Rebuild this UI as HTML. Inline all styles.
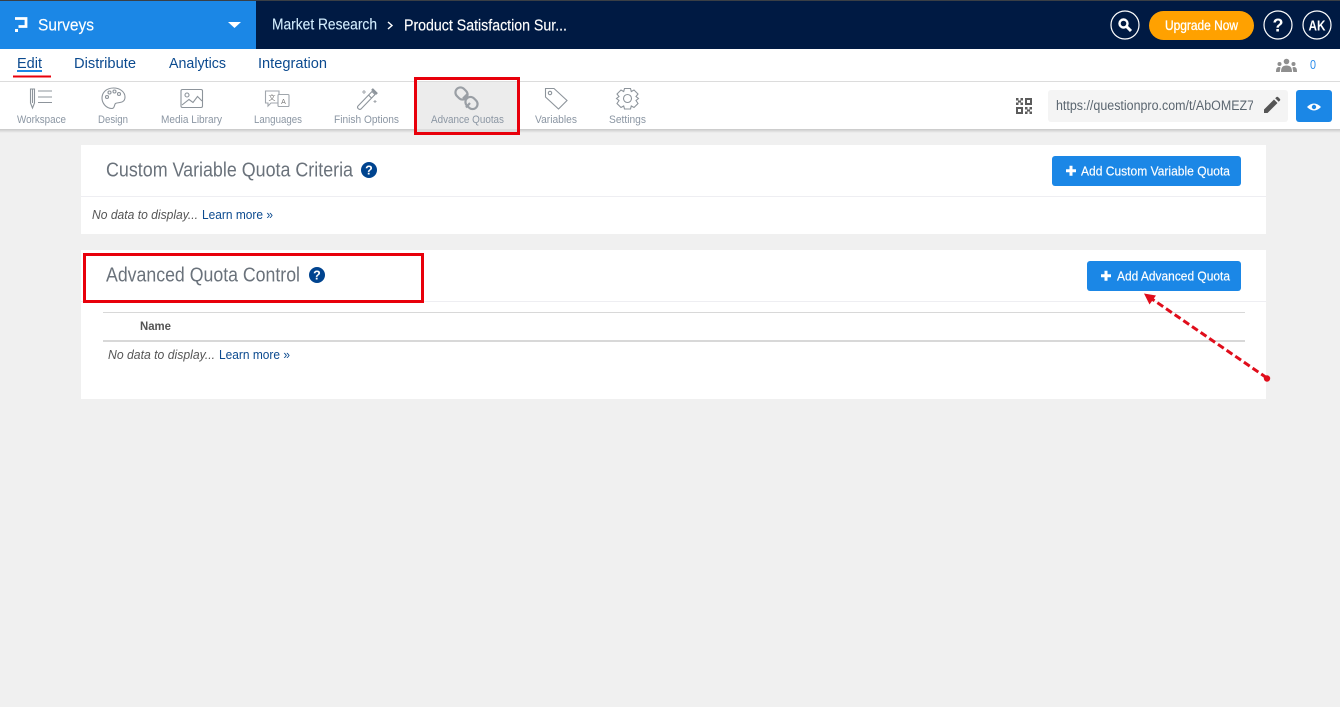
<!DOCTYPE html>
<html lang="en"><head><meta charset="utf-8"><title>Advance Quotas</title>
<style>
html,body{margin:0;padding:0;width:1340px;height:707px;overflow:hidden;background:#f0f0f0}
svg{display:block;font-family:"Liberation Sans",sans-serif}
.ic{fill:none;stroke:#8d949b;stroke-width:1.1}
.t{font-size:11px;fill:#8b96a3}
.n{font-size:15px;fill:#0b4a8f}
.b{font-size:13px;fill:#fff;stroke:#fff;stroke-width:.15}
.h{font-size:20px;fill:#6a727b}
.nd{font-size:13px;font-style:italic;fill:#555}
.lm{font-size:13px;fill:#0b4a8f}
</style></head><body>
<svg width="1340" height="707" viewBox="0 0 1340 707" xmlns="http://www.w3.org/2000/svg">
<defs>
<linearGradient id="sh" x1="0" y1="0" x2="0" y2="1"><stop offset="0" stop-color="#c8c8c8"/><stop offset="1" stop-color="#f0f0f0"/></linearGradient>
<clipPath id="u"><rect x="1050" y="92" width="203" height="28"/></clipPath>
</defs>
<rect width="1340" height="707" fill="#f0f0f0"/>
<!-- header -->
<rect width="1340" height="49" fill="#001a43"/>
<rect width="256" height="49" fill="#1b87e6"/>
<rect width="1340" height="1" fill="#3a3f45"/>
<path d="M15 18.500H26V26.500H18.500" fill="none" stroke="#fff" stroke-width="2.800"/><rect x="15" y="29" width="3" height="3" fill="#fff"/>
<text x="38" y="30.500" font-size="17" fill="#fff" stroke="#fff" stroke-width=".15" textLength="56" lengthAdjust="spacingAndGlyphs">Surveys</text>
<path d="M228 22H241L234.500 28Z" fill="#fff"/>
<text x="272" y="29.500" font-size="16" fill="#d3eeff" stroke="#d3eeff" stroke-width=".1" textLength="105" lengthAdjust="spacingAndGlyphs">Market Research</text>
<path d="M388 22L392 25.500L388 29" fill="none" stroke="#fff" stroke-width="1.400"/>
<text x="404" y="30.500" font-size="15.500" fill="#fff" stroke="#fff" stroke-width=".15" textLength="163" lengthAdjust="spacingAndGlyphs">Product Satisfaction Sur...</text>
<circle cx="1125" cy="25" r="14" fill="none" stroke="#fff" stroke-width="1.200"/>
<circle cx="1123.500" cy="23.500" r="4" fill="none" stroke="#fff" stroke-width="2.400"/><path d="M1126.500 26.500L1131 31" stroke="#fff" stroke-width="3"/>
<rect x="1149" y="11" width="105" height="29" rx="14.500" fill="#ffa100"/>
<text x="1165" y="30" font-size="14" fill="#fff" stroke="#fff" stroke-width=".3" textLength="73" lengthAdjust="spacingAndGlyphs">Upgrade Now</text>
<circle cx="1278" cy="25" r="14" fill="none" stroke="#fff" stroke-width="1.200"/>
<text x="1278" y="31.500" font-size="18" font-weight="700" fill="#fff" text-anchor="middle">?</text>
<circle cx="1317" cy="25" r="14" fill="none" stroke="#fff" stroke-width="1.200"/>
<text x="1308.500" y="30.500" font-size="15" font-weight="700" fill="#fff" textLength="17" lengthAdjust="spacingAndGlyphs">AK</text>
<!-- nav -->
<rect y="49" width="1340" height="32" fill="#fff"/>
<text class="n" x="17" y="68" textLength="25" lengthAdjust="spacingAndGlyphs">Edit</text>
<rect x="17" y="70" width="25" height="2" fill="#1b87e6"/>
<rect x="13" y="75.500" width="38" height="2" fill="#e8000b"/>
<text class="n" x="74" y="68" textLength="62" lengthAdjust="spacingAndGlyphs">Distribute</text>
<text class="n" x="169" y="68" textLength="57" lengthAdjust="spacingAndGlyphs">Analytics</text>
<text class="n" x="258" y="68" textLength="69" lengthAdjust="spacingAndGlyphs">Integration</text>
<g fill="#8f8f8f"><circle cx="1286.500" cy="61.500" r="2.800"/><path d="M1281 72c0-5 2-6.500 5.500-6.500s5.500 1.500 5.500 6.500z"/><circle cx="1279.500" cy="64" r="2"/><path d="M1276 72c0-4 1-5 3.500-5l1 .5-.8 4.500z"/><circle cx="1293.500" cy="64" r="2"/><path d="M1297 72c0-4-1-5-3.500-5l-1 .5.800 4.500z"/></g>
<text x="1310" y="69" font-size="13" fill="#2a8ceb" textLength="6" lengthAdjust="spacingAndGlyphs">0</text>
<rect y="81" width="1340" height="1" fill="#dcdcdc"/>
<!-- toolbar -->
<rect y="129" width="1340" height="4" fill="url(#sh)"/>
<rect y="82" width="1340" height="47" fill="#fff"/>
<rect x="416" y="82" width="102" height="47" fill="#ececec"/>
<rect x="416" y="129" width="102" height="4" fill="#dcdcdc"/>
<!-- workspace -->
<g class="ic"><path d="M30.500 89H34.500V103L32.500 108L30.500 103Z"/><path d="M32.500 89V103"/><path d="M38 91H52M38 97H52M38 102.500H52"/></g>
<!-- design -->
<g class="ic"><path d="M113.500 88C106 88 102 93 102 98C102 103 106 108.500 112 108.500C115 108.500 114 104.500 115.500 103.500C117.500 102 125 104 125 97C125 92 120 88 113.500 88Z"/><circle cx="107" cy="97" r="1.500"/><circle cx="109.500" cy="92.500" r="1.500"/><circle cx="114.500" cy="91.500" r="1.500"/><circle cx="119" cy="94" r="1.500"/></g>
<!-- media -->
<g class="ic"><rect x="181" y="89.500" width="21.500" height="18" rx="1.500"/><circle cx="187" cy="95" r="2"/><path d="M182 105L189 99.500L193 102.500L197.500 96.500L202 101"/></g>
<!-- languages -->
<g class="ic"><path d="M265.500 91H279V103H271L268 106V103H265.500Z" stroke="#a0a6ac"/><rect x="278" y="94.500" width="11" height="12" rx="1" fill="#fff" stroke="#a0a6ac"/></g>
<text x="283.500" y="104" font-size="7" fill="#777" text-anchor="middle">A</text>
<text x="272" y="100" font-size="7" fill="#777" text-anchor="middle" font-family="Noto Sans CJK SC, sans-serif">文</text>
<!-- wand -->
<g class="ic"><path d="M358 106L372 91.500L375 94.500L361 109Q359.500 110 358 108.500Q357 107 358 106Z"/><path d="M368.500 95L371.500 98"/><path d="M364 90V94M362 92H366M375 100V103M373.500 101.500H376.500" stroke="#a5aaaf"/><path d="M372 89L377 94" stroke-width="2.500"/></g>
<!-- chain -->
<g fill="none" stroke="#9a9fa5" stroke-width="2.200"><rect x="455" y="88.500" width="13" height="10" rx="5" transform="rotate(45 461.500 93.500)"/><rect x="465" y="98" width="13" height="10" rx="5" transform="rotate(45 471.500 103)"/><path d="M463 98.500L467.500 94M466 107.500L470 103"/></g>
<!-- tag -->
<g class="ic"><path d="M545.500 88.500H554L567 100.500L558.500 109L545.500 97Z"/><circle cx="550" cy="93" r="1.700"/></g>
<!-- gear -->
<g class="ic"><circle cx="627.500" cy="98.500" r="4"/><path d="M624.500 88.500H630.500L631.300 91.500L634 90L638 94L636 96.500L638.500 98.500L636 100.500L638 103.500L634 107.500L631.300 106L630.500 109H624.500L623.700 106L621 107.500L617 103.500L619 100.500L616.500 98.500L619 96.500L617 94L621 90L623.700 91.500Z"/></g>
<text class="t" x="17" y="123" textLength="49" lengthAdjust="spacingAndGlyphs">Workspace</text>
<text class="t" x="98" y="123" textLength="30" lengthAdjust="spacingAndGlyphs">Design</text>
<text class="t" x="161" y="123" textLength="61" lengthAdjust="spacingAndGlyphs">Media Library</text>
<text class="t" x="254" y="123" textLength="48" lengthAdjust="spacingAndGlyphs">Languages</text>
<text class="t" x="334" y="123" textLength="65" lengthAdjust="spacingAndGlyphs">Finish Options</text>
<text class="t" x="431" y="123" textLength="73" lengthAdjust="spacingAndGlyphs">Advance Quotas</text>
<text class="t" x="535" y="123" textLength="42" lengthAdjust="spacingAndGlyphs">Variables</text>
<text class="t" x="609" y="123" textLength="37" lengthAdjust="spacingAndGlyphs">Settings</text>
<rect x="415.500" y="78.500" width="103" height="55" fill="none" stroke="#e8000b" stroke-width="3"/>
<!-- qr -->
<g fill="#5c5c5c"><path fill-rule="evenodd" d="M1025 98h7v7h-7zM1027 100v3h3v-3zM1016 107h7v7h-7zM1018 109v3h3v-3z"/><path d="M1016 98h2.500v2.500h-2.500zM1020.500 98h2.500v2.500h-2.500zM1018 100.500h3v2h-3zM1016 102.500h2.500v2.500h-2.500zM1020.500 102.500h2.500v2.500h-2.500zM1025 107h2.500v2.500h-2.500zM1029.500 107h2.500v2.500h-2.500zM1027 109.500h3v2h-3zM1025 111.500h2.500v2.500h-2.500zM1029.500 111.500h2.500v2.500h-2.500z"/></g>
<rect x="1048" y="90" width="240" height="32" rx="3" fill="#f4f4f4"/>
<text x="1056" y="110" font-size="13.500" fill="#5b6670" clip-path="url(#u)" textLength="205" lengthAdjust="spacingAndGlyphs">https://questionpro.com/t/AbOMEZ7a</text>
<path d="M1264 113V109.500L1274 99.500L1277.500 103L1267.500 113ZM1275.200 98.300L1276.500 97Q1277.200 96.500 1278 97L1280 99Q1280.500 99.800 1280 100.500L1278.700 101.800Z" fill="#555"/>
<rect x="1296" y="90" width="36" height="32" rx="3" fill="#1b87e6"/>
<path d="M1307 107Q1314 100 1321 107Q1314 114 1307 107Z" fill="#fff"/><circle cx="1314" cy="107" r="2.200" fill="#1b87e6"/>
<!-- card 1 -->
<rect x="81" y="145" width="1185" height="89" fill="#fff"/>
<rect x="81" y="196" width="1185" height="1" fill="#eeeef2"/>
<text class="h" x="106" y="176.500" textLength="247" lengthAdjust="spacingAndGlyphs">Custom Variable Quota Criteria</text>
<circle cx="369" cy="170" r="8" fill="#00448f"/><text x="369" y="174.500" font-size="12.500" font-weight="700" fill="#fff" text-anchor="middle">?</text>
<rect x="1052" y="156" width="189" height="30" rx="3" fill="#1b87e6"/>
<path d="M1066 170.700H1076M1071 165.700V175.700" stroke="#fff" stroke-width="3"/>
<text class="b" x="1081" y="175.500" textLength="149" lengthAdjust="spacingAndGlyphs">Add Custom Variable Quota</text>
<text class="nd" x="92" y="219" textLength="106" lengthAdjust="spacingAndGlyphs">No data to display...</text>
<text class="lm" x="202" y="219" textLength="71" lengthAdjust="spacingAndGlyphs">Learn more »</text>
<!-- card 2 -->
<rect x="81" y="250" width="1185" height="149" fill="#fff"/>
<rect x="81" y="301" width="1185" height="1" fill="#eeeef2"/>
<text class="h" x="106" y="281.500" textLength="194" lengthAdjust="spacingAndGlyphs">Advanced Quota Control</text>
<circle cx="317" cy="275" r="8" fill="#00448f"/><text x="317" y="279.500" font-size="12.500" font-weight="700" fill="#fff" text-anchor="middle">?</text>
<rect x="84.500" y="254.500" width="338" height="47" fill="none" stroke="#e8000b" stroke-width="3"/>
<rect x="1087" y="261" width="154" height="30" rx="3" fill="#1b87e6"/>
<path d="M1101 275.700H1111M1106 270.700V280.700" stroke="#fff" stroke-width="3"/>
<text class="b" x="1117" y="280.500" textLength="113" lengthAdjust="spacingAndGlyphs">Add Advanced Quota</text>
<rect x="103" y="312" width="1142" height="1" fill="#d8d8d8"/>
<rect x="103" y="340" width="1142" height="2" fill="#d8d8d8"/>
<text x="140" y="330" font-size="12" font-weight="700" fill="#555" textLength="31" lengthAdjust="spacingAndGlyphs">Name</text>
<text class="nd" x="108" y="359" textLength="107" lengthAdjust="spacingAndGlyphs">No data to display...</text>
<text class="lm" x="219" y="359" textLength="71" lengthAdjust="spacingAndGlyphs">Learn more »</text>
<!-- arrow -->
<path d="M1267 378L1152 299" stroke="#e00d1b" stroke-width="3" stroke-dasharray="7 3.500"/>
<path d="M1144 293.500L1156 295.500L1149.500 304.500Z" fill="#e00d1b"/>
<circle cx="1267" cy="378.500" r="3.200" fill="#e00d1b"/>
</svg>
</body></html>
